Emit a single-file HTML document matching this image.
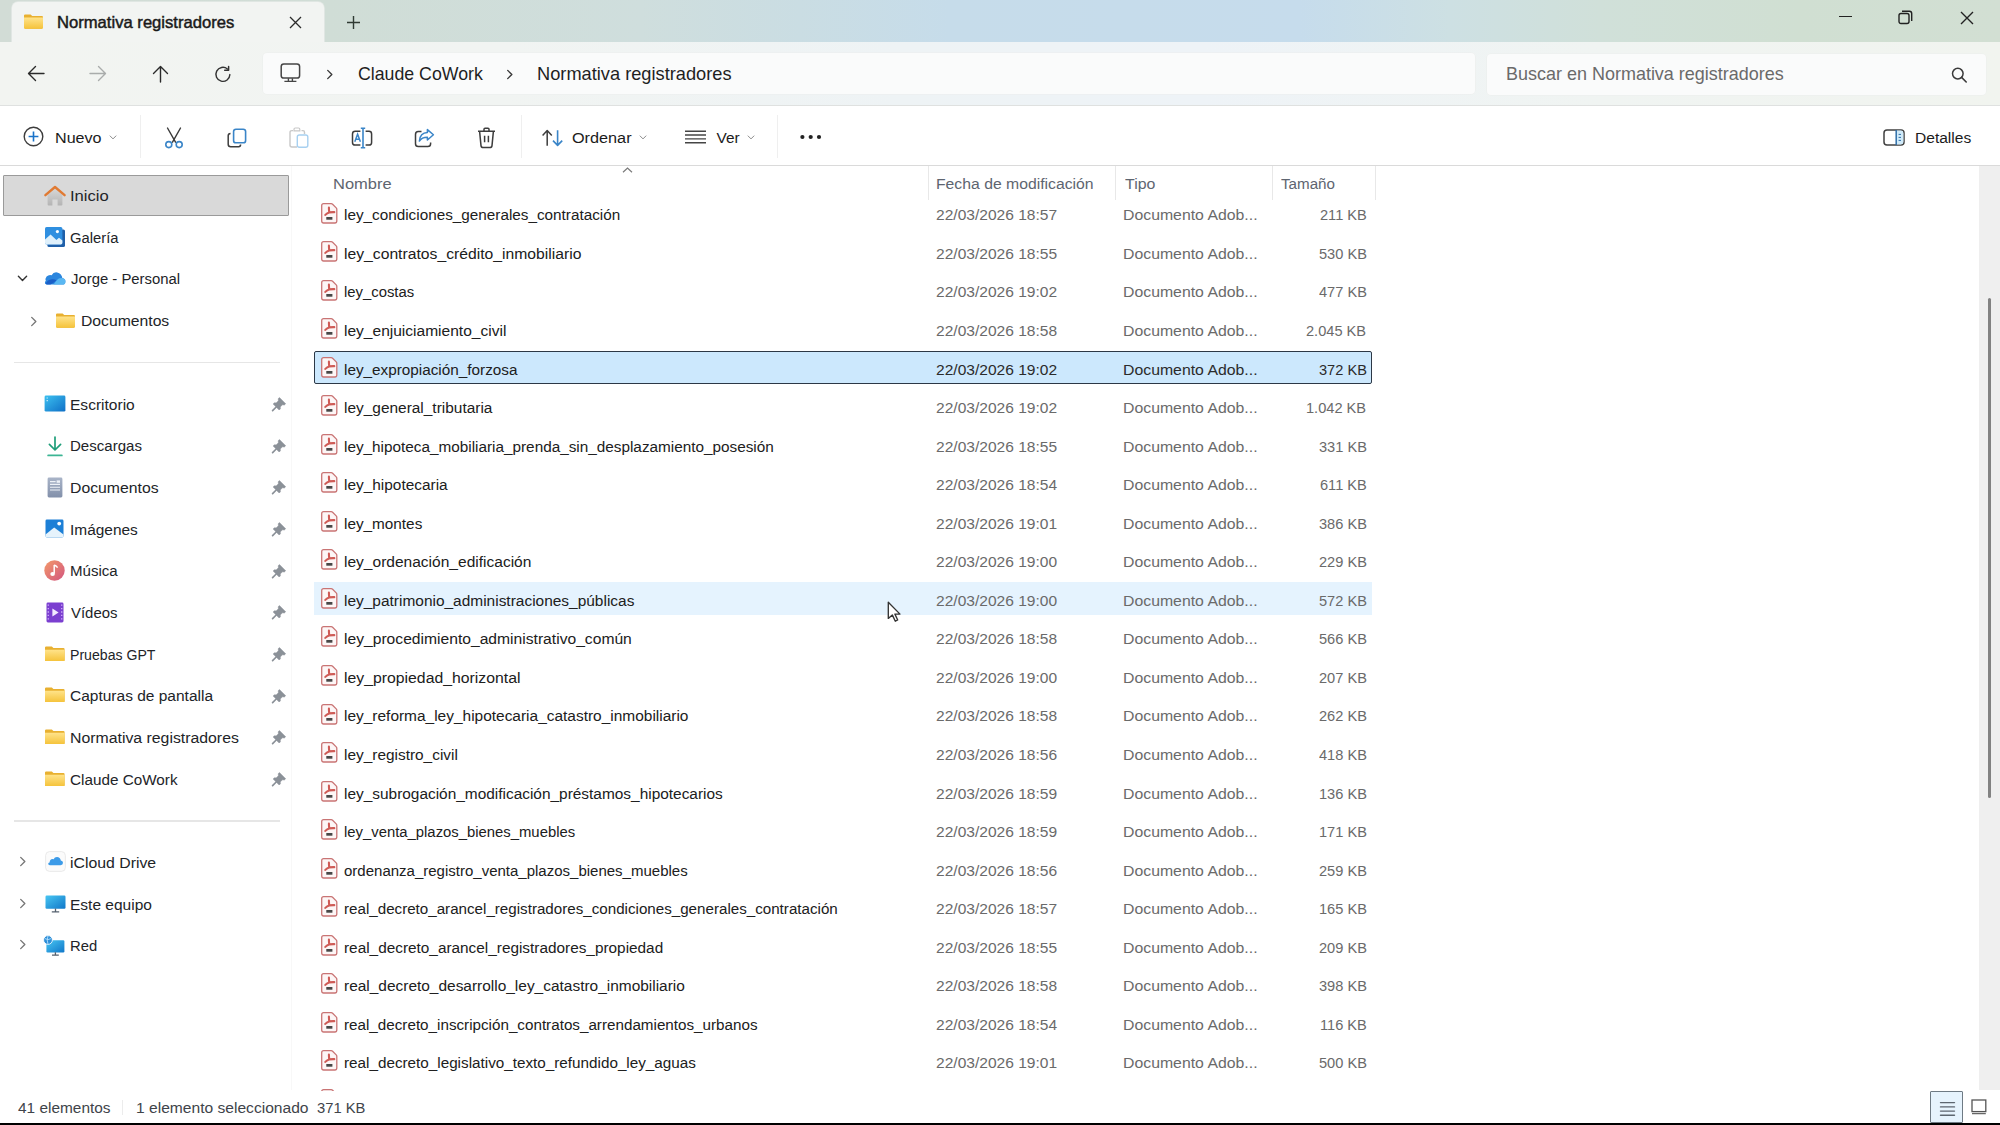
<!DOCTYPE html>
<html><head><meta charset="utf-8"><title>Normativa registradores</title>
<style>
html,body{margin:0;padding:0;}
body{width:2000px;height:1125px;overflow:hidden;position:relative;background:#fff;font-family:"Liberation Sans", sans-serif;}
.r{position:absolute;}
.t{position:absolute;white-space:nowrap;line-height:1;}
svg.r{overflow:visible;}
</style></head><body>
<div class="r" style="left:0.00px;top:0.00px;width:2000.00px;height:42.00px;background:linear-gradient(90deg,#d2dcd6 0%,#d0ddd6 16.5%,#cfdedd 32%,#cadde3 40%,#c6dcea 47.5%,#c6dcec 65%,#cde0e3 72.5%,#d0e0d9 80%,#d0dfd2 90%,#d2dfd3 100%)"></div>
<div class="r" style="left:11.50px;top:1.80px;width:312.50px;height:42.00px;background:#f2f4f2;border-radius:6px 6px 0 0;box-shadow:0 0 0 0.8px #e4e9e6"></div>
<svg class="r" style="left:23.80px;top:13.80px" width="19" height="15" viewBox="0 0 20 15"><defs><linearGradient id="fg" x1="0" y1="0" x2="0" y2="1"><stop offset="0" stop-color="#ffe38a"/><stop offset="1" stop-color="#f5c33b"/></linearGradient></defs><path d="M0 1.2Q0 0 1.2 0H7L8.6 1.6H18.8Q20 1.6 20 2.8V13.8Q20 15 18.8 15H1.2Q0 15 0 13.8Z" fill="#e8b030"/><path d="M0 3.4H20V13.8Q20 15 18.8 15H1.2Q0 15 0 13.8Z" fill="url(#fg)"/></svg>
<div class="t" style="left:56.55px;top:15.00px;font-size:15.9px;color:#1a1a1a;font-weight:400;transform:scaleX(1.0458);transform-origin:0 0;-webkit-text-stroke:0.45px #1a1a1a;">Normativa registradores</div>
<svg class="r" style="left:289.00px;top:16.00px;" width="13" height="13" viewBox="0 0 13 13" fill="none"><path d="M1 1L12 12M12 1L1 12" stroke="#2b2b2b" stroke-width="1.3"/></svg>
<svg class="r" style="left:346.00px;top:15.00px;" width="15" height="15" viewBox="0 0 15 15" fill="none"><path d="M7.5 1V14M1 7.5H14" stroke="#2f3a33" stroke-width="1.4"/></svg>
<div class="r" style="left:1838.50px;top:16.00px;width:13.00px;height:1.40px;background:#222"></div>
<svg class="r" style="left:1898.00px;top:10.00px;" width="15" height="15" viewBox="0 0 15 15" fill="none"><rect x="1" y="3.5" width="10" height="10" rx="2" stroke="#222" stroke-width="1.4"/><path d="M4 1.3H11.5Q13.7 1.3 13.7 3.5V11" stroke="#222" stroke-width="1.4"/></svg>
<svg class="r" style="left:1959.50px;top:10.50px;" width="14" height="14" viewBox="0 0 14 14" fill="none"><path d="M1 1L13 13M13 1L1 13" stroke="#222" stroke-width="1.4"/></svg>
<div class="r" style="left:0.00px;top:42.00px;width:2000.00px;height:63.00px;background:linear-gradient(90deg,#f2f4f1 0%,#f1f4f2 25%,#eef3f5 45%,#eef3f7 60%,#f0f4f2 80%,#f1f4ef 100%)"></div>
<div class="r" style="left:0.00px;top:104.60px;width:2000.00px;height:1.20px;background:#dfe1e0"></div>
<svg class="r" style="left:27.00px;top:65.00px;" width="18" height="17" viewBox="0 0 18 17" fill="none"><path d="M17 8.5H2M8.5 1.5L1.5 8.5 8.5 15.5" stroke="#2a2a2a" stroke-width="1.4" stroke-linecap="round" stroke-linejoin="round"/></svg>
<svg class="r" style="left:89.00px;top:65.00px;" width="18" height="17" viewBox="0 0 18 17" fill="none"><path d="M1 8.5H16M9.5 1.5L16.5 8.5 9.5 15.5" stroke="#a9acab" stroke-width="1.4" stroke-linecap="round" stroke-linejoin="round"/></svg>
<svg class="r" style="left:152.00px;top:65.00px;" width="17" height="18" viewBox="0 0 17 18" fill="none"><path d="M8.5 17V2M1.5 8.5L8.5 1.5 15.5 8.5" stroke="#2a2a2a" stroke-width="1.4" stroke-linecap="round" stroke-linejoin="round"/></svg>
<svg class="r" style="left:214.00px;top:64.60px;" width="18" height="18" viewBox="0 0 18 18" fill="none"><path d="M15.9 9.6A7 7 0 1 1 13.4 4" stroke="#333" stroke-width="1.45" stroke-linecap="round"/><path d="M14.6 1.4V5.3H10.7" stroke="#333" stroke-width="1.5" stroke-linecap="round" stroke-linejoin="round"/></svg>
<div class="r" style="left:262.60px;top:52.80px;width:1212.40px;height:41.50px;background:#fafbfb;border-radius:4px;box-shadow:0 0 0 0.6px #eceeed"></div>
<svg class="r" style="left:280.00px;top:63.00px;" width="21" height="20" viewBox="0 0 21 20" fill="none"><rect x="1.2" y="1" width="18.4" height="14" rx="2.6" stroke="#454545" stroke-width="1.5"/><path d="M4.4 18.4H16.4M8.4 15.2V18.2M12.4 15.2V18.2" stroke="#454545" stroke-width="1.4"/></svg>
<svg class="r" style="left:326.00px;top:68.50px" width="8" height="11" viewBox="0 0 8 12"><path d="M1.5 1.5L6 6 1.5 10.5" stroke="#3a3a3a" stroke-width="1.5" fill="none" stroke-linecap="round" stroke-linejoin="round"/></svg>
<div class="t" style="left:357.84px;top:65.00px;font-size:18.5px;color:#1f1f1f;font-weight:400;transform:scaleX(0.9581);transform-origin:0 0;">Claude CoWork</div>
<svg class="r" style="left:505.50px;top:68.50px" width="8" height="11" viewBox="0 0 8 12"><path d="M1.5 1.5L6 6 1.5 10.5" stroke="#3a3a3a" stroke-width="1.5" fill="none" stroke-linecap="round" stroke-linejoin="round"/></svg>
<div class="t" style="left:536.61px;top:65.00px;font-size:18.5px;color:#1f1f1f;font-weight:400;transform:scaleX(0.9857);transform-origin:0 0;">Normativa registradores</div>
<div class="r" style="left:1487.00px;top:54.00px;width:498.60px;height:40.80px;background:#fafbfb;border-radius:4px;box-shadow:0 0 0 0.6px #eceeed"></div>
<div class="t" style="left:1506.03px;top:65.00px;font-size:18.5px;color:#6a6a6a;font-weight:400;transform:scaleX(0.9718);transform-origin:0 0;">Buscar en Normativa registradores</div>
<svg class="r" style="left:1951.00px;top:66.50px;" width="17" height="16" viewBox="0 0 17 16" fill="none"><circle cx="6.8" cy="6.6" r="5.3" stroke="#3a3a3a" stroke-width="1.5"/><path d="M10.6 10.4L15.2 15" stroke="#3a3a3a" stroke-width="1.6" stroke-linecap="round"/></svg>
<div class="r" style="left:0.00px;top:105.80px;width:2000.00px;height:59.70px;background:#ffffff"></div>
<div class="r" style="left:0.00px;top:165.00px;width:2000.00px;height:1.20px;background:#dadada"></div>
<svg class="r" style="left:23.00px;top:126.00px;" width="21" height="21" viewBox="0 0 21 21" fill="none"><circle cx="10.5" cy="10.5" r="9.3" stroke="#3d3d3d" stroke-width="1.4"/><path d="M10.5 5.6V15.4M5.6 10.5H15.4" stroke="#1a73c9" stroke-width="1.6"/></svg>
<div class="t" style="left:54.95px;top:130.00px;font-size:15.4px;color:#1b1b1b;font-weight:400;transform:scaleX(1.0465);transform-origin:0 0;">Nuevo</div>
<svg class="r" style="left:109.40px;top:134.60px" width="8" height="5" viewBox="0 0 12 8"><path d="M1.3 1.5L6 6.2 10.7 1.5" stroke="#666" stroke-width="1.2" fill="none" stroke-linecap="round" stroke-linejoin="round"/></svg>
<div class="r" style="left:140.00px;top:115.00px;width:1.00px;height:43.00px;background:#efefef"></div>
<svg class="r" style="left:164.00px;top:126.50px;" width="20" height="22" viewBox="0 0 20 22" fill="none"><path d="M3.5 1L11.5 15.2M16.5 1L8.5 15.2" stroke="#3a3a3a" stroke-width="1.4" stroke-linecap="round"/><circle cx="4.8" cy="17.6" r="3" stroke="#3a85c8" stroke-width="1.6" fill="#fff"/><circle cx="15.2" cy="17.6" r="3" stroke="#3a85c8" stroke-width="1.6" fill="#fff"/></svg>
<svg class="r" style="left:227.00px;top:127.50px;" width="20" height="20" viewBox="0 0 20 20" fill="none"><path d="M3.5 5.5Q1.2 5.5 1.2 7.8V16.2Q1.2 18.7 3.7 18.7H11.6Q13.6 18.7 13.6 16.6" stroke="#3d3d3d" stroke-width="1.5" fill="none"/><rect x="6.6" y="1.2" width="12" height="13.6" rx="2.4" stroke="#3a85c8" stroke-width="1.6" fill="#fff"/></svg>
<svg class="r" style="left:289.00px;top:127.00px;" width="20" height="21" viewBox="0 0 20 21" fill="none"><path d="M4 3.6H3Q1 3.6 1 5.6V18Q1 20 3 20H8" stroke="#c8c8c8" stroke-width="1.4"/><path d="M5 2.2Q5 1 6.2 1H9.6Q10.8 1 10.8 2.2V3.8H5Z" stroke="#c8c8c8" stroke-width="1.2"/><path d="M12.5 3.6H14Q15.5 3.6 15.5 5.2V7" stroke="#c8c8c8" stroke-width="1.4"/><rect x="8.3" y="8" width="10.5" height="12.2" rx="2" stroke="#a7d0f0" stroke-width="1.4" fill="#fff"/></svg>
<svg class="r" style="left:350.50px;top:126.50px;" width="22" height="22" viewBox="0 0 22 22" fill="none"><path d="M9.4 4.2H4.2Q1.5 4.2 1.5 6.9V15.4Q1.5 18 4.2 18H9.4M14.6 4.2H18Q20.6 4.2 20.6 6.9V15.4Q20.6 18 18 18H14.6" stroke="#3d3d3d" stroke-width="1.5"/><path d="M12 1.2V20.8M9.8 1.2H14.2M9.8 20.8H14.2" stroke="#3a85c8" stroke-width="1.6"/><path d="M3.8 14.8L6.6 7.2 9.4 14.8M4.8 12.2H8.4" stroke="#3a85c8" stroke-width="1.5"/></svg>
<svg class="r" style="left:413.50px;top:127.50px;" width="21" height="20" viewBox="0 0 21 20" fill="none"><path d="M7.5 3.6H4.3Q1.5 3.6 1.5 6.4V15.8Q1.5 18.6 4.3 18.6H13.8Q16.6 18.6 16.6 15.8V14.5" stroke="#3d3d3d" stroke-width="1.5" fill="none"/><path d="M13.4 1.6L19.4 6.8 13.4 12V9.2C9.8 9.2 7.2 10.2 5.4 13 5.8 8.2 8.4 4.8 13.4 4.6Z" stroke="#3a85c8" stroke-width="1.5" stroke-linejoin="round" fill="none"/></svg>
<svg class="r" style="left:476.50px;top:126.50px;" width="19" height="22" viewBox="0 0 19 22" fill="none"><path d="M1 4.2H18M7 4V2.2Q7 1.2 8 1.2H11Q12 1.2 12 2.2V4" stroke="#3d3d3d" stroke-width="1.5"/><path d="M2.6 4.4L4 18.6Q4.2 20.6 6.2 20.6H12.8Q14.8 20.6 15 18.6L16.4 4.4" stroke="#3d3d3d" stroke-width="1.5" fill="none"/><path d="M7.6 8.8V15.2M11.4 8.8V15.2" stroke="#3d3d3d" stroke-width="1.5"/></svg>
<div class="r" style="left:521.00px;top:115.00px;width:1.00px;height:43.00px;background:#efefef"></div>
<svg class="r" style="left:541.00px;top:128.50px;" width="23" height="18" viewBox="0 0 23 18" fill="none"><path d="M6.2 16.8V2M1.6 6.4L6.2 1.6 10.8 6.4" stroke="#3d3d3d" stroke-width="1.5" stroke-linejoin="round"/><path d="M16.6 1.2V16M12 11.6L16.6 16.4 21.2 11.6" stroke="#3a85c8" stroke-width="1.6" stroke-linejoin="round"/></svg>
<div class="t" style="left:571.95px;top:130.00px;font-size:15.4px;color:#1b1b1b;font-weight:400;transform:scaleX(1.0545);transform-origin:0 0;">Ordenar</div>
<svg class="r" style="left:638.60px;top:134.60px" width="8" height="5" viewBox="0 0 12 8"><path d="M1.3 1.5L6 6.2 10.7 1.5" stroke="#666" stroke-width="1.2" fill="none" stroke-linecap="round" stroke-linejoin="round"/></svg>
<svg class="r" style="left:685.00px;top:129.50px;" width="22" height="15" viewBox="0 0 22 15" fill="none"><path d="M0 1.2H21M0 5H21M0 8.9H21M0 12.8H21" stroke="#454545" stroke-width="1.4"/></svg>
<div class="t" style="left:716.60px;top:130.00px;font-size:15.4px;color:#1b1b1b;font-weight:400;">Ver</div>
<svg class="r" style="left:746.60px;top:134.60px" width="8" height="5" viewBox="0 0 12 8"><path d="M1.3 1.5L6 6.2 10.7 1.5" stroke="#666" stroke-width="1.2" fill="none" stroke-linecap="round" stroke-linejoin="round"/></svg>
<div class="r" style="left:777.00px;top:115.00px;width:1.00px;height:43.00px;background:#efefef"></div>
<svg class="r" style="left:799.50px;top:134.00px;" width="22" height="6" viewBox="0 0 22 6" fill="none"><circle cx="2.4" cy="3" r="2.1" fill="#222"/><circle cx="10.7" cy="3" r="2.1" fill="#222"/><circle cx="19" cy="3" r="2.1" fill="#222"/></svg>
<svg class="r" style="left:1882.50px;top:128.50px;" width="22" height="17" viewBox="0 0 22 17" fill="none"><rect x="1" y="1" width="20" height="15" rx="3" stroke="#404040" stroke-width="1.5" fill="#fff"/><path d="M13.2 1.6H18Q20.4 1.6 20.4 4V13Q20.4 15.4 18 15.4H13.2Z" fill="#cfeaf9"/><path d="M13.2 1V16" stroke="#2f6ea8" stroke-width="1.5"/><path d="M15.6 5.4H18M15.6 8.4H18M15.6 11.4H18" stroke="#2f6ea8" stroke-width="1"/></svg>
<div class="t" style="left:1914.59px;top:130.00px;font-size:15.4px;color:#1b1b1b;font-weight:400;transform:scaleX(1.0111);transform-origin:0 0;">Detalles</div>
<div class="r" style="left:290.60px;top:166.20px;width:1.20px;height:924.00px;background:#f8f8f8"></div>
<div class="r" style="left:3.00px;top:174.60px;width:286.40px;height:41.00px;background:#d9d9d9;border:1.8px solid #9a9a9a;box-sizing:border-box;border-radius:1px"></div>
<svg class="r" style="left:44.20px;top:184.60px" width="22" height="21" viewBox="0 0 22 21"><defs><linearGradient id="hg" x1="0" y1="0" x2="0" y2="1"><stop offset="0" stop-color="#d8d8d8"/><stop offset="1" stop-color="#b4b4b4"/></linearGradient></defs><path d="M3.6 9.4L11 3.2 18.4 9.4V19.4Q18.4 20.4 17.4 20.4H13.6V14.6H8.4V20.4H4.6Q3.6 20.4 3.6 19.4Z" fill="url(#hg)"/><path d="M1.4 10.2L11 2 20.6 10.2" stroke="#e07a33" stroke-width="2.4" fill="none" stroke-linecap="round" stroke-linejoin="round"/></svg>
<div class="t" style="left:69.92px;top:188.00px;font-size:15.4px;color:#222428;font-weight:400;transform:scaleX(1.0794);transform-origin:0 0;">Inicio</div>
<svg class="r" style="left:44.20px;top:225.80px" width="22" height="22" viewBox="0 0 22 22"><rect x="3.4" y="3.4" width="17.6" height="17.6" rx="1.6" fill="#1f5fa8"/><rect x="1" y="1" width="17.4" height="17.4" rx="1.6" fill="#2f8fe0"/><path d="M1 13.6L6.6 8.6 12.4 14 15 11.8 18.4 14.6V16.8Q18.4 18.4 16.8 18.4H2.6Q1 18.4 1 16.8Z" fill="#dff0fb"/><circle cx="13.4" cy="5.6" r="1.6" fill="#fff"/></svg>
<div class="t" style="left:70.04px;top:230.00px;font-size:15.4px;color:#222428;font-weight:400;transform:scaleX(0.9600);transform-origin:0 0;">Galería</div>
<svg class="r" style="left:16.80px;top:275.20px" width="11" height="7" viewBox="0 0 12 8"><path d="M1.3 1.5L6 6.2 10.7 1.5" stroke="#333" stroke-width="1.6" fill="none" stroke-linecap="round" stroke-linejoin="round"/></svg>
<svg class="r" style="left:44.40px;top:271.40px" width="22" height="14" viewBox="0 0 22 14"><path d="M6.2 13.6H18.2Q21.4 13.6 21.4 10.4 21.4 7.4 18.4 7.2 17.8 2.4 13.2 1.4 9.4.8 7.6 4.2 4.6 3.4 2.6 5.6 1 7.6 1.8 9.8 .6 11.2 1 12.4 1.6 13.6 6.2 13.6Z" fill="#2b86de"/><path d="M9.6 13.6H18.2Q21.4 13.6 21.4 10.4 21.4 7.4 18.4 7.2 15.2 6.6 12.6 9.2Z" fill="#5ab8f2"/><path d="M1.6 12.8Q3.4 8.6 8 8.2 10.4 8 12.6 9.2 9.8 11.6 6.4 13.6H2.8Z" fill="#1a5fc8"/></svg>
<div class="t" style="left:71.00px;top:271.00px;font-size:15.4px;color:#222428;font-weight:400;transform:scaleX(0.9661);transform-origin:0 0;">Jorge - Personal</div>
<svg class="r" style="left:29.60px;top:315.80px" width="8" height="11" viewBox="0 0 8 12"><path d="M1.5 1.5L6 6 1.5 10.5" stroke="#777" stroke-width="1.5" fill="none" stroke-linecap="round" stroke-linejoin="round"/></svg>
<svg class="r" style="left:55.80px;top:313.00px" width="19" height="15" viewBox="0 0 20 15"><defs><linearGradient id="fg" x1="0" y1="0" x2="0" y2="1"><stop offset="0" stop-color="#ffe38a"/><stop offset="1" stop-color="#f5c33b"/></linearGradient></defs><path d="M0 1.2Q0 0 1.2 0H7L8.6 1.6H18.8Q20 1.6 20 2.8V13.8Q20 15 18.8 15H1.2Q0 15 0 13.8Z" fill="#e8b030"/><path d="M0 3.4H20V13.8Q20 15 18.8 15H1.2Q0 15 0 13.8Z" fill="url(#fg)"/></svg>
<div class="t" style="left:80.58px;top:313.00px;font-size:15.4px;color:#222428;font-weight:400;transform:scaleX(1.0212);transform-origin:0 0;">Documentos</div>
<div class="r" style="left:13.80px;top:361.60px;width:266.00px;height:1.20px;background:#e6e6e6"></div>
<svg class="r" style="left:44.20px;top:395.20px" width="22" height="17" viewBox="0 0 22 17"><defs><linearGradient id="dg" x1="0" y1="0" x2="1" y2="1"><stop offset="0" stop-color="#3cc0f0"/><stop offset="1" stop-color="#0f6fc6"/></linearGradient></defs><rect x=".6" y=".6" width="20.8" height="16" rx="1.4" fill="url(#dg)"/><path d="M2.6 3H3.8M2.6 5.6H3.8" stroke="#d8f2ff" stroke-width="1.2"/></svg>
<div class="t" style="left:69.99px;top:397.00px;font-size:15.4px;color:#222428;font-weight:400;transform:scaleX(1.0095);transform-origin:0 0;">Escritorio</div>
<svg class="r" style="left:271.00px;top:396.00px" width="16" height="16" viewBox="0 0 16 16"><path d="M8.4 1.6L14.6 7.8 13.4 8.9 11.4 8.8 9.2 11 9.4 12.8 8.2 14 2.2 8 3.4 6.8 5.2 7 7.4 4.8 7.3 2.8Z" fill="#8b9198" stroke="#8b9198" stroke-width=".6" stroke-linejoin="round"/><path d="M5.2 11L1.6 14.6" stroke="#8b9198" stroke-width="1.7" stroke-linecap="round"/></svg>
<svg class="r" style="left:47.00px;top:435.60px" width="16" height="21" viewBox="0 0 16 21"><path d="M8 1V13.8M2.4 8.4L8 14 13.6 8.4" stroke="#1f9e7a" stroke-width="1.7" fill="none" stroke-linecap="round" stroke-linejoin="round"/><path d="M1.2 19.4H14.8" stroke="#3cb594" stroke-width="1.9" stroke-linecap="round"/></svg>
<div class="t" style="left:70.02px;top:438.00px;font-size:15.4px;color:#222428;font-weight:400;transform:scaleX(0.9778);transform-origin:0 0;">Descargas</div>
<svg class="r" style="left:271.00px;top:437.70px" width="16" height="16" viewBox="0 0 16 16"><path d="M8.4 1.6L14.6 7.8 13.4 8.9 11.4 8.8 9.2 11 9.4 12.8 8.2 14 2.2 8 3.4 6.8 5.2 7 7.4 4.8 7.3 2.8Z" fill="#8b9198" stroke="#8b9198" stroke-width=".6" stroke-linejoin="round"/><path d="M5.2 11L1.6 14.6" stroke="#8b9198" stroke-width="1.7" stroke-linecap="round"/></svg>
<svg class="r" style="left:47.00px;top:476.80px" width="16" height="21" viewBox="0 0 16 21"><defs><linearGradient id="docg" x1="0" y1="0" x2="0" y2="1"><stop offset="0" stop-color="#a9b4c8"/><stop offset="1" stop-color="#8290aa"/></linearGradient></defs><rect x=".6" y=".6" width="14.8" height="19.8" rx="1.4" fill="url(#docg)"/><path d="M3 4.6H8.6M3 7.4H13M3 10.2H13M3 13H13" stroke="#eef2f8" stroke-width="1.1"/><rect x="9.6" y="3.4" width="3.4" height="2.4" fill="#eef2f8"/></svg>
<div class="t" style="left:69.98px;top:480.00px;font-size:15.4px;color:#222428;font-weight:400;transform:scaleX(1.0247);transform-origin:0 0;">Documentos</div>
<svg class="r" style="left:271.00px;top:479.40px" width="16" height="16" viewBox="0 0 16 16"><path d="M8.4 1.6L14.6 7.8 13.4 8.9 11.4 8.8 9.2 11 9.4 12.8 8.2 14 2.2 8 3.4 6.8 5.2 7 7.4 4.8 7.3 2.8Z" fill="#8b9198" stroke="#8b9198" stroke-width=".6" stroke-linejoin="round"/><path d="M5.2 11L1.6 14.6" stroke="#8b9198" stroke-width="1.7" stroke-linecap="round"/></svg>
<svg class="r" style="left:45.20px;top:519.20px" width="19" height="19" viewBox="0 0 19 19"><rect x=".5" y=".5" width="18" height="18" rx="1.4" fill="#1c7fd6"/><path d="M.5 15.6L9.2 8.6 18.5 15.6V17.2Q18.5 18.5 17.2 18.5H1.8Q.5 18.5 .5 17.2Z" fill="#e6f3fc"/><circle cx="14.2" cy="4.6" r="1.9" fill="#fff"/></svg>
<div class="t" style="left:70.00px;top:522.00px;font-size:15.4px;color:#222428;font-weight:400;transform:scaleX(1.0030);transform-origin:0 0;">Imágenes</div>
<svg class="r" style="left:271.00px;top:521.00px" width="16" height="16" viewBox="0 0 16 16"><path d="M8.4 1.6L14.6 7.8 13.4 8.9 11.4 8.8 9.2 11 9.4 12.8 8.2 14 2.2 8 3.4 6.8 5.2 7 7.4 4.8 7.3 2.8Z" fill="#8b9198" stroke="#8b9198" stroke-width=".6" stroke-linejoin="round"/><path d="M5.2 11L1.6 14.6" stroke="#8b9198" stroke-width="1.7" stroke-linecap="round"/></svg>
<svg class="r" style="left:44.40px;top:559.80px" width="21" height="21" viewBox="0 0 21 21"><defs><linearGradient id="mg" x1="0" y1="0" x2="1" y2="1"><stop offset="0" stop-color="#f39a6a"/><stop offset="1" stop-color="#d2557f"/></linearGradient></defs><circle cx="10.5" cy="10.5" r="10.2" fill="url(#mg)"/><path d="M10.2 5V13.6" stroke="#fff" stroke-width="1.5"/><path d="M10.2 5Q12.6 5.8 13.6 7.6" stroke="#fff" stroke-width="1.4" fill="none"/><ellipse cx="8.6" cy="14" rx="2.3" ry="1.9" fill="#fff"/></svg>
<div class="t" style="left:70.02px;top:563.00px;font-size:15.4px;color:#222428;font-weight:400;transform:scaleX(0.9792);transform-origin:0 0;">Música</div>
<svg class="r" style="left:271.00px;top:562.70px" width="16" height="16" viewBox="0 0 16 16"><path d="M8.4 1.6L14.6 7.8 13.4 8.9 11.4 8.8 9.2 11 9.4 12.8 8.2 14 2.2 8 3.4 6.8 5.2 7 7.4 4.8 7.3 2.8Z" fill="#8b9198" stroke="#8b9198" stroke-width=".6" stroke-linejoin="round"/><path d="M5.2 11L1.6 14.6" stroke="#8b9198" stroke-width="1.7" stroke-linecap="round"/></svg>
<svg class="r" style="left:46.20px;top:601.60px" width="18" height="21" viewBox="0 0 18 21"><rect x=".5" y=".5" width="17" height="20" rx="1.4" fill="#7b3fd0"/><path d="M1.6 3.2H3M1.6 6.6H3M1.6 10H3M1.6 13.4H3M1.6 16.8H3M15 3.2H16.4M15 6.6H16.4M15 10H16.4M15 13.4H16.4M15 16.8H16.4" stroke="#c9a8f5" stroke-width="1.3"/><path d="M6.4 6.4V14.4L12.6 10.4Z" fill="#f2eaff"/></svg>
<div class="t" style="left:71.00px;top:605.00px;font-size:15.4px;color:#222428;font-weight:400;transform:scaleX(0.9708);transform-origin:0 0;">Vídeos</div>
<svg class="r" style="left:271.00px;top:604.40px" width="16" height="16" viewBox="0 0 16 16"><path d="M8.4 1.6L14.6 7.8 13.4 8.9 11.4 8.8 9.2 11 9.4 12.8 8.2 14 2.2 8 3.4 6.8 5.2 7 7.4 4.8 7.3 2.8Z" fill="#8b9198" stroke="#8b9198" stroke-width=".6" stroke-linejoin="round"/><path d="M5.2 11L1.6 14.6" stroke="#8b9198" stroke-width="1.7" stroke-linecap="round"/></svg>
<svg class="r" style="left:44.80px;top:645.80px" width="19.6" height="15.5" viewBox="0 0 20 15"><defs><linearGradient id="fg" x1="0" y1="0" x2="0" y2="1"><stop offset="0" stop-color="#ffe38a"/><stop offset="1" stop-color="#f5c33b"/></linearGradient></defs><path d="M0 1.2Q0 0 1.2 0H7L8.6 1.6H18.8Q20 1.6 20 2.8V13.8Q20 15 18.8 15H1.2Q0 15 0 13.8Z" fill="#e8b030"/><path d="M0 3.4H20V13.8Q20 15 18.8 15H1.2Q0 15 0 13.8Z" fill="url(#fg)"/></svg>
<div class="t" style="left:70.08px;top:647.00px;font-size:15.4px;color:#222428;font-weight:400;transform:scaleX(0.9163);transform-origin:0 0;">Pruebas GPT</div>
<svg class="r" style="left:271.00px;top:646.00px" width="16" height="16" viewBox="0 0 16 16"><path d="M8.4 1.6L14.6 7.8 13.4 8.9 11.4 8.8 9.2 11 9.4 12.8 8.2 14 2.2 8 3.4 6.8 5.2 7 7.4 4.8 7.3 2.8Z" fill="#8b9198" stroke="#8b9198" stroke-width=".6" stroke-linejoin="round"/><path d="M5.2 11L1.6 14.6" stroke="#8b9198" stroke-width="1.7" stroke-linecap="round"/></svg>
<svg class="r" style="left:44.80px;top:687.47px" width="19.6" height="15.5" viewBox="0 0 20 15"><defs><linearGradient id="fg" x1="0" y1="0" x2="0" y2="1"><stop offset="0" stop-color="#ffe38a"/><stop offset="1" stop-color="#f5c33b"/></linearGradient></defs><path d="M0 1.2Q0 0 1.2 0H7L8.6 1.6H18.8Q20 1.6 20 2.8V13.8Q20 15 18.8 15H1.2Q0 15 0 13.8Z" fill="#e8b030"/><path d="M0 3.4H20V13.8Q20 15 18.8 15H1.2Q0 15 0 13.8Z" fill="url(#fg)"/></svg>
<div class="t" style="left:69.99px;top:688.00px;font-size:15.4px;color:#222428;font-weight:400;transform:scaleX(1.0071);transform-origin:0 0;">Capturas de pantalla</div>
<svg class="r" style="left:271.00px;top:687.67px" width="16" height="16" viewBox="0 0 16 16"><path d="M8.4 1.6L14.6 7.8 13.4 8.9 11.4 8.8 9.2 11 9.4 12.8 8.2 14 2.2 8 3.4 6.8 5.2 7 7.4 4.8 7.3 2.8Z" fill="#8b9198" stroke="#8b9198" stroke-width=".6" stroke-linejoin="round"/><path d="M5.2 11L1.6 14.6" stroke="#8b9198" stroke-width="1.7" stroke-linecap="round"/></svg>
<svg class="r" style="left:44.80px;top:729.14px" width="19.6" height="15.5" viewBox="0 0 20 15"><defs><linearGradient id="fg" x1="0" y1="0" x2="0" y2="1"><stop offset="0" stop-color="#ffe38a"/><stop offset="1" stop-color="#f5c33b"/></linearGradient></defs><path d="M0 1.2Q0 0 1.2 0H7L8.6 1.6H18.8Q20 1.6 20 2.8V13.8Q20 15 18.8 15H1.2Q0 15 0 13.8Z" fill="#e8b030"/><path d="M0 3.4H20V13.8Q20 15 18.8 15H1.2Q0 15 0 13.8Z" fill="url(#fg)"/></svg>
<div class="t" style="left:69.97px;top:730.00px;font-size:15.4px;color:#222428;font-weight:400;transform:scaleX(1.0282);transform-origin:0 0;">Normativa registradores</div>
<svg class="r" style="left:271.00px;top:729.34px" width="16" height="16" viewBox="0 0 16 16"><path d="M8.4 1.6L14.6 7.8 13.4 8.9 11.4 8.8 9.2 11 9.4 12.8 8.2 14 2.2 8 3.4 6.8 5.2 7 7.4 4.8 7.3 2.8Z" fill="#8b9198" stroke="#8b9198" stroke-width=".6" stroke-linejoin="round"/><path d="M5.2 11L1.6 14.6" stroke="#8b9198" stroke-width="1.7" stroke-linecap="round"/></svg>
<svg class="r" style="left:44.80px;top:770.81px" width="19.6" height="15.5" viewBox="0 0 20 15"><defs><linearGradient id="fg" x1="0" y1="0" x2="0" y2="1"><stop offset="0" stop-color="#ffe38a"/><stop offset="1" stop-color="#f5c33b"/></linearGradient></defs><path d="M0 1.2Q0 0 1.2 0H7L8.6 1.6H18.8Q20 1.6 20 2.8V13.8Q20 15 18.8 15H1.2Q0 15 0 13.8Z" fill="#e8b030"/><path d="M0 3.4H20V13.8Q20 15 18.8 15H1.2Q0 15 0 13.8Z" fill="url(#fg)"/></svg>
<div class="t" style="left:70.01px;top:772.00px;font-size:15.4px;color:#222428;font-weight:400;transform:scaleX(0.9925);transform-origin:0 0;">Claude CoWork</div>
<svg class="r" style="left:271.00px;top:771.01px" width="16" height="16" viewBox="0 0 16 16"><path d="M8.4 1.6L14.6 7.8 13.4 8.9 11.4 8.8 9.2 11 9.4 12.8 8.2 14 2.2 8 3.4 6.8 5.2 7 7.4 4.8 7.3 2.8Z" fill="#8b9198" stroke="#8b9198" stroke-width=".6" stroke-linejoin="round"/><path d="M5.2 11L1.6 14.6" stroke="#8b9198" stroke-width="1.7" stroke-linecap="round"/></svg>
<div class="r" style="left:13.80px;top:820.40px;width:266.00px;height:1.20px;background:#e6e6e6"></div>
<svg class="r" style="left:19.20px;top:856.00px" width="8" height="11" viewBox="0 0 8 12"><path d="M1.5 1.5L6 6 1.5 10.5" stroke="#777" stroke-width="1.5" fill="none" stroke-linecap="round" stroke-linejoin="round"/></svg>
<svg class="r" style="left:44.60px;top:851.40px" width="21" height="21" viewBox="0 0 21 21"><rect x=".6" y=".6" width="19.8" height="19.8" rx="4" fill="#fbfbfb" stroke="#e4e4e4" stroke-width=".8"/><path d="M5.2 14.2H15.6Q18 14.2 18 11.8 18 9.6 15.8 9.4 15.2 6.2 12 6 9.6 6 8.6 8.2 6.6 7.6 5.4 9 4.4 10.2 4.8 11.2 3 11.6 3.2 13 3.6 14.2 5.2 14.2Z" fill="#3c9be8"/></svg>
<div class="t" style="left:69.97px;top:855.00px;font-size:15.4px;color:#222428;font-weight:400;transform:scaleX(1.0280);transform-origin:0 0;">iCloud Drive</div>
<svg class="r" style="left:19.20px;top:897.60px" width="8" height="11" viewBox="0 0 8 12"><path d="M1.5 1.5L6 6 1.5 10.5" stroke="#777" stroke-width="1.5" fill="none" stroke-linecap="round" stroke-linejoin="round"/></svg>
<svg class="r" style="left:44.60px;top:895.00px" width="21" height="18" viewBox="0 0 21 18"><defs><linearGradient id="pg" x1="0" y1="0" x2="1" y2="1"><stop offset="0" stop-color="#48c6f2"/><stop offset="1" stop-color="#1077c9"/></linearGradient></defs><rect x=".5" y=".5" width="20" height="13.2" rx="1.2" fill="url(#pg)"/><path d="M10.5 13.6V16.4M6.8 16.8H14.2" stroke="#54606e" stroke-width="1.3"/></svg>
<div class="t" style="left:69.99px;top:897.00px;font-size:15.4px;color:#222428;font-weight:400;transform:scaleX(1.0075);transform-origin:0 0;">Este equipo</div>
<svg class="r" style="left:19.20px;top:939.40px" width="8" height="11" viewBox="0 0 8 12"><path d="M1.5 1.5L6 6 1.5 10.5" stroke="#777" stroke-width="1.5" fill="none" stroke-linecap="round" stroke-linejoin="round"/></svg>
<svg class="r" style="left:43.20px;top:935.00px" width="22" height="21" viewBox="0 0 22 21"><defs><linearGradient id="ng" x1="0" y1="0" x2="1" y2="1"><stop offset="0" stop-color="#48c6f2"/><stop offset="1" stop-color="#1077c9"/></linearGradient></defs><rect x="3.4" y="5.2" width="18" height="12.2" rx="1.2" fill="url(#ng)"/><path d="M12.4 17.2V19.6M9 20.2H15.8" stroke="#54606e" stroke-width="1.3"/><circle cx="5" cy="5" r="4.4" fill="#2e8fd8" stroke="#fff" stroke-width=".8"/><path d="M2 3.6Q5 5.6 8 3.6M5 .8Q3.4 5 5 9.2" stroke="#bfe6ff" stroke-width=".8" fill="none"/></svg>
<div class="t" style="left:70.04px;top:938.00px;font-size:15.4px;color:#222428;font-weight:400;transform:scaleX(0.9630);transform-origin:0 0;">Red</div>
<div class="t" style="left:332.53px;top:176.00px;font-size:15.4px;color:#5e6570;font-weight:400;transform:scaleX(1.0717);transform-origin:0 0;">Nombre</div>
<svg class="r" style="left:621.50px;top:166.60px;" width="11" height="6" viewBox="0 0 11 6" fill="none"><path d="M1 5.2L5.5 1 10 5.2" stroke="#7a7a7a" stroke-width="1.2" fill="none"/></svg>
<div class="r" style="left:928.10px;top:166.00px;width:1.10px;height:34.00px;background:#e8e8e8"></div>
<div class="r" style="left:1115.40px;top:166.00px;width:1.10px;height:34.00px;background:#e8e8e8"></div>
<div class="r" style="left:1271.90px;top:166.00px;width:1.10px;height:34.00px;background:#e8e8e8"></div>
<div class="r" style="left:1375.40px;top:166.00px;width:1.10px;height:34.00px;background:#e8e8e8"></div>
<div class="t" style="left:935.98px;top:176.00px;font-size:15.4px;color:#5e6570;font-weight:400;transform:scaleX(1.0230);transform-origin:0 0;">Fecha de modificación</div>
<div class="t" style="left:1125.00px;top:176.00px;font-size:15.4px;color:#5e6570;font-weight:400;transform:scaleX(1.0345);transform-origin:0 0;">Tipo</div>
<div class="t" style="left:1280.50px;top:176.00px;font-size:15.4px;color:#5e6570;font-weight:400;transform:scaleX(0.9861);transform-origin:0 0;">Tamaño</div>
<div class="r" style="left:0;top:201px;width:1979px;height:889.5px;overflow:hidden">
<div class="r" style="left:313.60px;top:381.30px;width:1058.40px;height:32.50px;background:#e5f3fe"></div>
<div class="r" style="left:313.60px;top:150.40px;width:1058.00px;height:32.20px;background:#cce8fd;border:1.6px solid #2c3846;box-sizing:border-box;border-radius:2px"></div>
<svg class="r" style="left:320.95px;top:1.50px" width="17" height="21" viewBox="0 0 17 21"><path d="M2.6 .7H10.2Q11 .7 11.6 1.3L15.2 4.9Q15.8 5.5 15.8 6.3V18.1Q15.8 20 13.9 20H2.6Q.7 20 .7 18.1V2.6Q.7 .7 2.6 .7Z" fill="#fdf6f6" stroke="#c97474" stroke-width="1.3"/><path d="M7.9 4.6Q8 7.4 8.2 9.4M4.3 11.9Q6.2 9.9 8.2 9.4M13.3 9.1Q10.6 9 8.2 9.4" stroke="#cf5b56" stroke-width="2.1" stroke-linecap="round" fill="none"/><rect x="5.3" y="14" width="6.1" height="2.7" fill="#474747"/></svg>
<div class="t" style="left:343.81px;top:6.00px;font-size:15.4px;color:#202020;font-weight:400;transform:scaleX(0.9935);transform-origin:0 0;">ley_condiciones_generales_contratación</div>
<div class="t" style="left:935.69px;top:6.00px;font-size:15.4px;color:#6a6a6a;font-weight:400;transform:scaleX(1.0110);transform-origin:0 0;">22/03/2026 18:57</div>
<div class="t" style="left:1123.37px;top:6.00px;font-size:15.4px;color:#6a6a6a;font-weight:400;transform:scaleX(1.0279);transform-origin:0 0;">Documento Adob...</div>
<div class="t" style="left:1319.50px;top:6.00px;font-size:15.4px;color:#6a6a6a;font-weight:400;transform:scaleX(0.9490);transform-origin:0 0;">211 KB</div>
<svg class="r" style="left:320.95px;top:40.04px" width="17" height="21" viewBox="0 0 17 21"><path d="M2.6 .7H10.2Q11 .7 11.6 1.3L15.2 4.9Q15.8 5.5 15.8 6.3V18.1Q15.8 20 13.9 20H2.6Q.7 20 .7 18.1V2.6Q.7 .7 2.6 .7Z" fill="#fdf6f6" stroke="#c97474" stroke-width="1.3"/><path d="M7.9 4.6Q8 7.4 8.2 9.4M4.3 11.9Q6.2 9.9 8.2 9.4M13.3 9.1Q10.6 9 8.2 9.4" stroke="#cf5b56" stroke-width="2.1" stroke-linecap="round" fill="none"/><rect x="5.3" y="14" width="6.1" height="2.7" fill="#474747"/></svg>
<div class="t" style="left:343.78px;top:45.00px;font-size:15.4px;color:#202020;font-weight:400;transform:scaleX(1.0203);transform-origin:0 0;">ley_contratos_crédito_inmobiliario</div>
<div class="t" style="left:935.69px;top:45.00px;font-size:15.4px;color:#6a6a6a;font-weight:400;transform:scaleX(1.0110);transform-origin:0 0;">22/03/2026 18:55</div>
<div class="t" style="left:1123.37px;top:45.00px;font-size:15.4px;color:#6a6a6a;font-weight:400;transform:scaleX(1.0279);transform-origin:0 0;">Documento Adob...</div>
<div class="t" style="left:1318.55px;top:45.00px;font-size:15.4px;color:#6a6a6a;font-weight:400;transform:scaleX(0.9490);transform-origin:0 0;">530 KB</div>
<svg class="r" style="left:320.95px;top:78.58px" width="17" height="21" viewBox="0 0 17 21"><path d="M2.6 .7H10.2Q11 .7 11.6 1.3L15.2 4.9Q15.8 5.5 15.8 6.3V18.1Q15.8 20 13.9 20H2.6Q.7 20 .7 18.1V2.6Q.7 .7 2.6 .7Z" fill="#fdf6f6" stroke="#c97474" stroke-width="1.3"/><path d="M7.9 4.6Q8 7.4 8.2 9.4M4.3 11.9Q6.2 9.9 8.2 9.4M13.3 9.1Q10.6 9 8.2 9.4" stroke="#cf5b56" stroke-width="2.1" stroke-linecap="round" fill="none"/><rect x="5.3" y="14" width="6.1" height="2.7" fill="#474747"/></svg>
<div class="t" style="left:343.84px;top:83.00px;font-size:15.4px;color:#202020;font-weight:400;transform:scaleX(0.9648);transform-origin:0 0;">ley_costas</div>
<div class="t" style="left:935.69px;top:83.00px;font-size:15.4px;color:#6a6a6a;font-weight:400;transform:scaleX(1.0110);transform-origin:0 0;">22/03/2026 19:02</div>
<div class="t" style="left:1123.37px;top:83.00px;font-size:15.4px;color:#6a6a6a;font-weight:400;transform:scaleX(1.0279);transform-origin:0 0;">Documento Adob...</div>
<div class="t" style="left:1318.55px;top:83.00px;font-size:15.4px;color:#6a6a6a;font-weight:400;transform:scaleX(0.9490);transform-origin:0 0;">477 KB</div>
<svg class="r" style="left:320.95px;top:117.12px" width="17" height="21" viewBox="0 0 17 21"><path d="M2.6 .7H10.2Q11 .7 11.6 1.3L15.2 4.9Q15.8 5.5 15.8 6.3V18.1Q15.8 20 13.9 20H2.6Q.7 20 .7 18.1V2.6Q.7 .7 2.6 .7Z" fill="#fdf6f6" stroke="#c97474" stroke-width="1.3"/><path d="M7.9 4.6Q8 7.4 8.2 9.4M4.3 11.9Q6.2 9.9 8.2 9.4M13.3 9.1Q10.6 9 8.2 9.4" stroke="#cf5b56" stroke-width="2.1" stroke-linecap="round" fill="none"/><rect x="5.3" y="14" width="6.1" height="2.7" fill="#474747"/></svg>
<div class="t" style="left:343.79px;top:122.00px;font-size:15.4px;color:#202020;font-weight:400;transform:scaleX(1.0094);transform-origin:0 0;">ley_enjuiciamiento_civil</div>
<div class="t" style="left:935.69px;top:122.00px;font-size:15.4px;color:#6a6a6a;font-weight:400;transform:scaleX(1.0110);transform-origin:0 0;">22/03/2026 18:58</div>
<div class="t" style="left:1123.37px;top:122.00px;font-size:15.4px;color:#6a6a6a;font-weight:400;transform:scaleX(1.0279);transform-origin:0 0;">Documento Adob...</div>
<div class="t" style="left:1306.21px;top:122.00px;font-size:15.4px;color:#6a6a6a;font-weight:400;transform:scaleX(0.9490);transform-origin:0 0;">2.045 KB</div>
<svg class="r" style="left:320.95px;top:155.66px" width="17" height="21" viewBox="0 0 17 21"><path d="M2.6 .7H10.2Q11 .7 11.6 1.3L15.2 4.9Q15.8 5.5 15.8 6.3V18.1Q15.8 20 13.9 20H2.6Q.7 20 .7 18.1V2.6Q.7 .7 2.6 .7Z" fill="#fdf6f6" stroke="#c97474" stroke-width="1.3"/><path d="M7.9 4.6Q8 7.4 8.2 9.4M4.3 11.9Q6.2 9.9 8.2 9.4M13.3 9.1Q10.6 9 8.2 9.4" stroke="#cf5b56" stroke-width="2.1" stroke-linecap="round" fill="none"/><rect x="5.3" y="14" width="6.1" height="2.7" fill="#474747"/></svg>
<div class="t" style="left:343.81px;top:161.00px;font-size:15.4px;color:#202020;font-weight:400;transform:scaleX(0.9937);transform-origin:0 0;">ley_expropiación_forzosa</div>
<div class="t" style="left:935.69px;top:161.00px;font-size:15.4px;color:#2b2b2b;font-weight:400;transform:scaleX(1.0110);transform-origin:0 0;">22/03/2026 19:02</div>
<div class="t" style="left:1123.37px;top:161.00px;font-size:15.4px;color:#2b2b2b;font-weight:400;transform:scaleX(1.0279);transform-origin:0 0;">Documento Adob...</div>
<div class="t" style="left:1318.55px;top:161.00px;font-size:15.4px;color:#2b2b2b;font-weight:400;transform:scaleX(0.9490);transform-origin:0 0;">372 KB</div>
<svg class="r" style="left:320.95px;top:194.20px" width="17" height="21" viewBox="0 0 17 21"><path d="M2.6 .7H10.2Q11 .7 11.6 1.3L15.2 4.9Q15.8 5.5 15.8 6.3V18.1Q15.8 20 13.9 20H2.6Q.7 20 .7 18.1V2.6Q.7 .7 2.6 .7Z" fill="#fdf6f6" stroke="#c97474" stroke-width="1.3"/><path d="M7.9 4.6Q8 7.4 8.2 9.4M4.3 11.9Q6.2 9.9 8.2 9.4M13.3 9.1Q10.6 9 8.2 9.4" stroke="#cf5b56" stroke-width="2.1" stroke-linecap="round" fill="none"/><rect x="5.3" y="14" width="6.1" height="2.7" fill="#474747"/></svg>
<div class="t" style="left:343.80px;top:199.00px;font-size:15.4px;color:#202020;font-weight:400;transform:scaleX(1.0027);transform-origin:0 0;">ley_general_tributaria</div>
<div class="t" style="left:935.69px;top:199.00px;font-size:15.4px;color:#6a6a6a;font-weight:400;transform:scaleX(1.0110);transform-origin:0 0;">22/03/2026 19:02</div>
<div class="t" style="left:1123.37px;top:199.00px;font-size:15.4px;color:#6a6a6a;font-weight:400;transform:scaleX(1.0279);transform-origin:0 0;">Documento Adob...</div>
<div class="t" style="left:1306.21px;top:199.00px;font-size:15.4px;color:#6a6a6a;font-weight:400;transform:scaleX(0.9490);transform-origin:0 0;">1.042 KB</div>
<svg class="r" style="left:320.95px;top:232.74px" width="17" height="21" viewBox="0 0 17 21"><path d="M2.6 .7H10.2Q11 .7 11.6 1.3L15.2 4.9Q15.8 5.5 15.8 6.3V18.1Q15.8 20 13.9 20H2.6Q.7 20 .7 18.1V2.6Q.7 .7 2.6 .7Z" fill="#fdf6f6" stroke="#c97474" stroke-width="1.3"/><path d="M7.9 4.6Q8 7.4 8.2 9.4M4.3 11.9Q6.2 9.9 8.2 9.4M13.3 9.1Q10.6 9 8.2 9.4" stroke="#cf5b56" stroke-width="2.1" stroke-linecap="round" fill="none"/><rect x="5.3" y="14" width="6.1" height="2.7" fill="#474747"/></svg>
<div class="t" style="left:343.81px;top:238.00px;font-size:15.4px;color:#202020;font-weight:400;transform:scaleX(0.9947);transform-origin:0 0;">ley_hipoteca_mobiliaria_prenda_sin_desplazamiento_posesión</div>
<div class="t" style="left:935.69px;top:238.00px;font-size:15.4px;color:#6a6a6a;font-weight:400;transform:scaleX(1.0110);transform-origin:0 0;">22/03/2026 18:55</div>
<div class="t" style="left:1123.37px;top:238.00px;font-size:15.4px;color:#6a6a6a;font-weight:400;transform:scaleX(1.0279);transform-origin:0 0;">Documento Adob...</div>
<div class="t" style="left:1318.55px;top:238.00px;font-size:15.4px;color:#6a6a6a;font-weight:400;transform:scaleX(0.9490);transform-origin:0 0;">331 KB</div>
<svg class="r" style="left:320.95px;top:271.28px" width="17" height="21" viewBox="0 0 17 21"><path d="M2.6 .7H10.2Q11 .7 11.6 1.3L15.2 4.9Q15.8 5.5 15.8 6.3V18.1Q15.8 20 13.9 20H2.6Q.7 20 .7 18.1V2.6Q.7 .7 2.6 .7Z" fill="#fdf6f6" stroke="#c97474" stroke-width="1.3"/><path d="M7.9 4.6Q8 7.4 8.2 9.4M4.3 11.9Q6.2 9.9 8.2 9.4M13.3 9.1Q10.6 9 8.2 9.4" stroke="#cf5b56" stroke-width="2.1" stroke-linecap="round" fill="none"/><rect x="5.3" y="14" width="6.1" height="2.7" fill="#474747"/></svg>
<div class="t" style="left:343.80px;top:276.00px;font-size:15.4px;color:#202020;font-weight:400;transform:scaleX(1.0010);transform-origin:0 0;">ley_hipotecaria</div>
<div class="t" style="left:935.69px;top:276.00px;font-size:15.4px;color:#6a6a6a;font-weight:400;transform:scaleX(1.0110);transform-origin:0 0;">22/03/2026 18:54</div>
<div class="t" style="left:1123.37px;top:276.00px;font-size:15.4px;color:#6a6a6a;font-weight:400;transform:scaleX(1.0279);transform-origin:0 0;">Documento Adob...</div>
<div class="t" style="left:1319.50px;top:276.00px;font-size:15.4px;color:#6a6a6a;font-weight:400;transform:scaleX(0.9490);transform-origin:0 0;">611 KB</div>
<svg class="r" style="left:320.95px;top:309.82px" width="17" height="21" viewBox="0 0 17 21"><path d="M2.6 .7H10.2Q11 .7 11.6 1.3L15.2 4.9Q15.8 5.5 15.8 6.3V18.1Q15.8 20 13.9 20H2.6Q.7 20 .7 18.1V2.6Q.7 .7 2.6 .7Z" fill="#fdf6f6" stroke="#c97474" stroke-width="1.3"/><path d="M7.9 4.6Q8 7.4 8.2 9.4M4.3 11.9Q6.2 9.9 8.2 9.4M13.3 9.1Q10.6 9 8.2 9.4" stroke="#cf5b56" stroke-width="2.1" stroke-linecap="round" fill="none"/><rect x="5.3" y="14" width="6.1" height="2.7" fill="#474747"/></svg>
<div class="t" style="left:343.81px;top:315.00px;font-size:15.4px;color:#202020;font-weight:400;transform:scaleX(0.9948);transform-origin:0 0;">ley_montes</div>
<div class="t" style="left:935.69px;top:315.00px;font-size:15.4px;color:#6a6a6a;font-weight:400;transform:scaleX(1.0110);transform-origin:0 0;">22/03/2026 19:01</div>
<div class="t" style="left:1123.37px;top:315.00px;font-size:15.4px;color:#6a6a6a;font-weight:400;transform:scaleX(1.0279);transform-origin:0 0;">Documento Adob...</div>
<div class="t" style="left:1318.55px;top:315.00px;font-size:15.4px;color:#6a6a6a;font-weight:400;transform:scaleX(0.9490);transform-origin:0 0;">386 KB</div>
<svg class="r" style="left:320.95px;top:348.36px" width="17" height="21" viewBox="0 0 17 21"><path d="M2.6 .7H10.2Q11 .7 11.6 1.3L15.2 4.9Q15.8 5.5 15.8 6.3V18.1Q15.8 20 13.9 20H2.6Q.7 20 .7 18.1V2.6Q.7 .7 2.6 .7Z" fill="#fdf6f6" stroke="#c97474" stroke-width="1.3"/><path d="M7.9 4.6Q8 7.4 8.2 9.4M4.3 11.9Q6.2 9.9 8.2 9.4M13.3 9.1Q10.6 9 8.2 9.4" stroke="#cf5b56" stroke-width="2.1" stroke-linecap="round" fill="none"/><rect x="5.3" y="14" width="6.1" height="2.7" fill="#474747"/></svg>
<div class="t" style="left:343.79px;top:353.00px;font-size:15.4px;color:#202020;font-weight:400;transform:scaleX(1.0092);transform-origin:0 0;">ley_ordenación_edificación</div>
<div class="t" style="left:935.69px;top:353.00px;font-size:15.4px;color:#6a6a6a;font-weight:400;transform:scaleX(1.0110);transform-origin:0 0;">22/03/2026 19:00</div>
<div class="t" style="left:1123.37px;top:353.00px;font-size:15.4px;color:#6a6a6a;font-weight:400;transform:scaleX(1.0279);transform-origin:0 0;">Documento Adob...</div>
<div class="t" style="left:1318.55px;top:353.00px;font-size:15.4px;color:#6a6a6a;font-weight:400;transform:scaleX(0.9490);transform-origin:0 0;">229 KB</div>
<svg class="r" style="left:320.95px;top:386.90px" width="17" height="21" viewBox="0 0 17 21"><path d="M2.6 .7H10.2Q11 .7 11.6 1.3L15.2 4.9Q15.8 5.5 15.8 6.3V18.1Q15.8 20 13.9 20H2.6Q.7 20 .7 18.1V2.6Q.7 .7 2.6 .7Z" fill="#fdf6f6" stroke="#c97474" stroke-width="1.3"/><path d="M7.9 4.6Q8 7.4 8.2 9.4M4.3 11.9Q6.2 9.9 8.2 9.4M13.3 9.1Q10.6 9 8.2 9.4" stroke="#cf5b56" stroke-width="2.1" stroke-linecap="round" fill="none"/><rect x="5.3" y="14" width="6.1" height="2.7" fill="#474747"/></svg>
<div class="t" style="left:343.80px;top:392.00px;font-size:15.4px;color:#202020;font-weight:400;transform:scaleX(1.0042);transform-origin:0 0;">ley_patrimonio_administraciones_públicas</div>
<div class="t" style="left:935.69px;top:392.00px;font-size:15.4px;color:#6a6a6a;font-weight:400;transform:scaleX(1.0110);transform-origin:0 0;">22/03/2026 19:00</div>
<div class="t" style="left:1123.37px;top:392.00px;font-size:15.4px;color:#6a6a6a;font-weight:400;transform:scaleX(1.0279);transform-origin:0 0;">Documento Adob...</div>
<div class="t" style="left:1318.55px;top:392.00px;font-size:15.4px;color:#6a6a6a;font-weight:400;transform:scaleX(0.9490);transform-origin:0 0;">572 KB</div>
<svg class="r" style="left:320.95px;top:425.44px" width="17" height="21" viewBox="0 0 17 21"><path d="M2.6 .7H10.2Q11 .7 11.6 1.3L15.2 4.9Q15.8 5.5 15.8 6.3V18.1Q15.8 20 13.9 20H2.6Q.7 20 .7 18.1V2.6Q.7 .7 2.6 .7Z" fill="#fdf6f6" stroke="#c97474" stroke-width="1.3"/><path d="M7.9 4.6Q8 7.4 8.2 9.4M4.3 11.9Q6.2 9.9 8.2 9.4M13.3 9.1Q10.6 9 8.2 9.4" stroke="#cf5b56" stroke-width="2.1" stroke-linecap="round" fill="none"/><rect x="5.3" y="14" width="6.1" height="2.7" fill="#474747"/></svg>
<div class="t" style="left:343.78px;top:430.00px;font-size:15.4px;color:#202020;font-weight:400;transform:scaleX(1.0164);transform-origin:0 0;">ley_procedimiento_administrativo_común</div>
<div class="t" style="left:935.69px;top:430.00px;font-size:15.4px;color:#6a6a6a;font-weight:400;transform:scaleX(1.0110);transform-origin:0 0;">22/03/2026 18:58</div>
<div class="t" style="left:1123.37px;top:430.00px;font-size:15.4px;color:#6a6a6a;font-weight:400;transform:scaleX(1.0279);transform-origin:0 0;">Documento Adob...</div>
<div class="t" style="left:1318.55px;top:430.00px;font-size:15.4px;color:#6a6a6a;font-weight:400;transform:scaleX(0.9490);transform-origin:0 0;">566 KB</div>
<svg class="r" style="left:320.95px;top:463.98px" width="17" height="21" viewBox="0 0 17 21"><path d="M2.6 .7H10.2Q11 .7 11.6 1.3L15.2 4.9Q15.8 5.5 15.8 6.3V18.1Q15.8 20 13.9 20H2.6Q.7 20 .7 18.1V2.6Q.7 .7 2.6 .7Z" fill="#fdf6f6" stroke="#c97474" stroke-width="1.3"/><path d="M7.9 4.6Q8 7.4 8.2 9.4M4.3 11.9Q6.2 9.9 8.2 9.4M13.3 9.1Q10.6 9 8.2 9.4" stroke="#cf5b56" stroke-width="2.1" stroke-linecap="round" fill="none"/><rect x="5.3" y="14" width="6.1" height="2.7" fill="#474747"/></svg>
<div class="t" style="left:343.77px;top:469.00px;font-size:15.4px;color:#202020;font-weight:400;transform:scaleX(1.0259);transform-origin:0 0;">ley_propiedad_horizontal</div>
<div class="t" style="left:935.69px;top:469.00px;font-size:15.4px;color:#6a6a6a;font-weight:400;transform:scaleX(1.0110);transform-origin:0 0;">22/03/2026 19:00</div>
<div class="t" style="left:1123.37px;top:469.00px;font-size:15.4px;color:#6a6a6a;font-weight:400;transform:scaleX(1.0279);transform-origin:0 0;">Documento Adob...</div>
<div class="t" style="left:1318.55px;top:469.00px;font-size:15.4px;color:#6a6a6a;font-weight:400;transform:scaleX(0.9490);transform-origin:0 0;">207 KB</div>
<svg class="r" style="left:320.95px;top:502.52px" width="17" height="21" viewBox="0 0 17 21"><path d="M2.6 .7H10.2Q11 .7 11.6 1.3L15.2 4.9Q15.8 5.5 15.8 6.3V18.1Q15.8 20 13.9 20H2.6Q.7 20 .7 18.1V2.6Q.7 .7 2.6 .7Z" fill="#fdf6f6" stroke="#c97474" stroke-width="1.3"/><path d="M7.9 4.6Q8 7.4 8.2 9.4M4.3 11.9Q6.2 9.9 8.2 9.4M13.3 9.1Q10.6 9 8.2 9.4" stroke="#cf5b56" stroke-width="2.1" stroke-linecap="round" fill="none"/><rect x="5.3" y="14" width="6.1" height="2.7" fill="#474747"/></svg>
<div class="t" style="left:343.80px;top:507.00px;font-size:15.4px;color:#202020;font-weight:400;transform:scaleX(1.0041);transform-origin:0 0;">ley_reforma_ley_hipotecaria_catastro_inmobiliario</div>
<div class="t" style="left:935.69px;top:507.00px;font-size:15.4px;color:#6a6a6a;font-weight:400;transform:scaleX(1.0110);transform-origin:0 0;">22/03/2026 18:58</div>
<div class="t" style="left:1123.37px;top:507.00px;font-size:15.4px;color:#6a6a6a;font-weight:400;transform:scaleX(1.0279);transform-origin:0 0;">Documento Adob...</div>
<div class="t" style="left:1318.55px;top:507.00px;font-size:15.4px;color:#6a6a6a;font-weight:400;transform:scaleX(0.9490);transform-origin:0 0;">262 KB</div>
<svg class="r" style="left:320.95px;top:541.06px" width="17" height="21" viewBox="0 0 17 21"><path d="M2.6 .7H10.2Q11 .7 11.6 1.3L15.2 4.9Q15.8 5.5 15.8 6.3V18.1Q15.8 20 13.9 20H2.6Q.7 20 .7 18.1V2.6Q.7 .7 2.6 .7Z" fill="#fdf6f6" stroke="#c97474" stroke-width="1.3"/><path d="M7.9 4.6Q8 7.4 8.2 9.4M4.3 11.9Q6.2 9.9 8.2 9.4M13.3 9.1Q10.6 9 8.2 9.4" stroke="#cf5b56" stroke-width="2.1" stroke-linecap="round" fill="none"/><rect x="5.3" y="14" width="6.1" height="2.7" fill="#474747"/></svg>
<div class="t" style="left:343.80px;top:546.00px;font-size:15.4px;color:#202020;font-weight:400;transform:scaleX(1.0009);transform-origin:0 0;">ley_registro_civil</div>
<div class="t" style="left:935.69px;top:546.00px;font-size:15.4px;color:#6a6a6a;font-weight:400;transform:scaleX(1.0110);transform-origin:0 0;">22/03/2026 18:56</div>
<div class="t" style="left:1123.37px;top:546.00px;font-size:15.4px;color:#6a6a6a;font-weight:400;transform:scaleX(1.0279);transform-origin:0 0;">Documento Adob...</div>
<div class="t" style="left:1318.55px;top:546.00px;font-size:15.4px;color:#6a6a6a;font-weight:400;transform:scaleX(0.9490);transform-origin:0 0;">418 KB</div>
<svg class="r" style="left:320.95px;top:579.60px" width="17" height="21" viewBox="0 0 17 21"><path d="M2.6 .7H10.2Q11 .7 11.6 1.3L15.2 4.9Q15.8 5.5 15.8 6.3V18.1Q15.8 20 13.9 20H2.6Q.7 20 .7 18.1V2.6Q.7 .7 2.6 .7Z" fill="#fdf6f6" stroke="#c97474" stroke-width="1.3"/><path d="M7.9 4.6Q8 7.4 8.2 9.4M4.3 11.9Q6.2 9.9 8.2 9.4M13.3 9.1Q10.6 9 8.2 9.4" stroke="#cf5b56" stroke-width="2.1" stroke-linecap="round" fill="none"/><rect x="5.3" y="14" width="6.1" height="2.7" fill="#474747"/></svg>
<div class="t" style="left:343.80px;top:585.00px;font-size:15.4px;color:#202020;font-weight:400;transform:scaleX(1.0016);transform-origin:0 0;">ley_subrogación_modificación_préstamos_hipotecarios</div>
<div class="t" style="left:935.69px;top:585.00px;font-size:15.4px;color:#6a6a6a;font-weight:400;transform:scaleX(1.0110);transform-origin:0 0;">22/03/2026 18:59</div>
<div class="t" style="left:1123.37px;top:585.00px;font-size:15.4px;color:#6a6a6a;font-weight:400;transform:scaleX(1.0279);transform-origin:0 0;">Documento Adob...</div>
<div class="t" style="left:1318.55px;top:585.00px;font-size:15.4px;color:#6a6a6a;font-weight:400;transform:scaleX(0.9490);transform-origin:0 0;">136 KB</div>
<svg class="r" style="left:320.95px;top:618.14px" width="17" height="21" viewBox="0 0 17 21"><path d="M2.6 .7H10.2Q11 .7 11.6 1.3L15.2 4.9Q15.8 5.5 15.8 6.3V18.1Q15.8 20 13.9 20H2.6Q.7 20 .7 18.1V2.6Q.7 .7 2.6 .7Z" fill="#fdf6f6" stroke="#c97474" stroke-width="1.3"/><path d="M7.9 4.6Q8 7.4 8.2 9.4M4.3 11.9Q6.2 9.9 8.2 9.4M13.3 9.1Q10.6 9 8.2 9.4" stroke="#cf5b56" stroke-width="2.1" stroke-linecap="round" fill="none"/><rect x="5.3" y="14" width="6.1" height="2.7" fill="#474747"/></svg>
<div class="t" style="left:343.84px;top:623.00px;font-size:15.4px;color:#202020;font-weight:400;transform:scaleX(0.9647);transform-origin:0 0;">ley_venta_plazos_bienes_muebles</div>
<div class="t" style="left:935.69px;top:623.00px;font-size:15.4px;color:#6a6a6a;font-weight:400;transform:scaleX(1.0110);transform-origin:0 0;">22/03/2026 18:59</div>
<div class="t" style="left:1123.37px;top:623.00px;font-size:15.4px;color:#6a6a6a;font-weight:400;transform:scaleX(1.0279);transform-origin:0 0;">Documento Adob...</div>
<div class="t" style="left:1318.55px;top:623.00px;font-size:15.4px;color:#6a6a6a;font-weight:400;transform:scaleX(0.9490);transform-origin:0 0;">171 KB</div>
<svg class="r" style="left:320.95px;top:656.68px" width="17" height="21" viewBox="0 0 17 21"><path d="M2.6 .7H10.2Q11 .7 11.6 1.3L15.2 4.9Q15.8 5.5 15.8 6.3V18.1Q15.8 20 13.9 20H2.6Q.7 20 .7 18.1V2.6Q.7 .7 2.6 .7Z" fill="#fdf6f6" stroke="#c97474" stroke-width="1.3"/><path d="M7.9 4.6Q8 7.4 8.2 9.4M4.3 11.9Q6.2 9.9 8.2 9.4M13.3 9.1Q10.6 9 8.2 9.4" stroke="#cf5b56" stroke-width="2.1" stroke-linecap="round" fill="none"/><rect x="5.3" y="14" width="6.1" height="2.7" fill="#474747"/></svg>
<div class="t" style="left:343.83px;top:662.00px;font-size:15.4px;color:#202020;font-weight:400;transform:scaleX(0.9749);transform-origin:0 0;">ordenanza_registro_venta_plazos_bienes_muebles</div>
<div class="t" style="left:935.69px;top:662.00px;font-size:15.4px;color:#6a6a6a;font-weight:400;transform:scaleX(1.0110);transform-origin:0 0;">22/03/2026 18:56</div>
<div class="t" style="left:1123.37px;top:662.00px;font-size:15.4px;color:#6a6a6a;font-weight:400;transform:scaleX(1.0279);transform-origin:0 0;">Documento Adob...</div>
<div class="t" style="left:1318.55px;top:662.00px;font-size:15.4px;color:#6a6a6a;font-weight:400;transform:scaleX(0.9490);transform-origin:0 0;">259 KB</div>
<svg class="r" style="left:320.95px;top:695.22px" width="17" height="21" viewBox="0 0 17 21"><path d="M2.6 .7H10.2Q11 .7 11.6 1.3L15.2 4.9Q15.8 5.5 15.8 6.3V18.1Q15.8 20 13.9 20H2.6Q.7 20 .7 18.1V2.6Q.7 .7 2.6 .7Z" fill="#fdf6f6" stroke="#c97474" stroke-width="1.3"/><path d="M7.9 4.6Q8 7.4 8.2 9.4M4.3 11.9Q6.2 9.9 8.2 9.4M13.3 9.1Q10.6 9 8.2 9.4" stroke="#cf5b56" stroke-width="2.1" stroke-linecap="round" fill="none"/><rect x="5.3" y="14" width="6.1" height="2.7" fill="#474747"/></svg>
<div class="t" style="left:343.82px;top:700.00px;font-size:15.4px;color:#202020;font-weight:400;transform:scaleX(0.9848);transform-origin:0 0;">real_decreto_arancel_registradores_condiciones_generales_contratación</div>
<div class="t" style="left:935.69px;top:700.00px;font-size:15.4px;color:#6a6a6a;font-weight:400;transform:scaleX(1.0110);transform-origin:0 0;">22/03/2026 18:57</div>
<div class="t" style="left:1123.37px;top:700.00px;font-size:15.4px;color:#6a6a6a;font-weight:400;transform:scaleX(1.0279);transform-origin:0 0;">Documento Adob...</div>
<div class="t" style="left:1318.55px;top:700.00px;font-size:15.4px;color:#6a6a6a;font-weight:400;transform:scaleX(0.9490);transform-origin:0 0;">165 KB</div>
<svg class="r" style="left:320.95px;top:733.76px" width="17" height="21" viewBox="0 0 17 21"><path d="M2.6 .7H10.2Q11 .7 11.6 1.3L15.2 4.9Q15.8 5.5 15.8 6.3V18.1Q15.8 20 13.9 20H2.6Q.7 20 .7 18.1V2.6Q.7 .7 2.6 .7Z" fill="#fdf6f6" stroke="#c97474" stroke-width="1.3"/><path d="M7.9 4.6Q8 7.4 8.2 9.4M4.3 11.9Q6.2 9.9 8.2 9.4M13.3 9.1Q10.6 9 8.2 9.4" stroke="#cf5b56" stroke-width="2.1" stroke-linecap="round" fill="none"/><rect x="5.3" y="14" width="6.1" height="2.7" fill="#474747"/></svg>
<div class="t" style="left:343.80px;top:739.00px;font-size:15.4px;color:#202020;font-weight:400;transform:scaleX(0.9975);transform-origin:0 0;">real_decreto_arancel_registradores_propiedad</div>
<div class="t" style="left:935.69px;top:739.00px;font-size:15.4px;color:#6a6a6a;font-weight:400;transform:scaleX(1.0110);transform-origin:0 0;">22/03/2026 18:55</div>
<div class="t" style="left:1123.37px;top:739.00px;font-size:15.4px;color:#6a6a6a;font-weight:400;transform:scaleX(1.0279);transform-origin:0 0;">Documento Adob...</div>
<div class="t" style="left:1318.55px;top:739.00px;font-size:15.4px;color:#6a6a6a;font-weight:400;transform:scaleX(0.9490);transform-origin:0 0;">209 KB</div>
<svg class="r" style="left:320.95px;top:772.30px" width="17" height="21" viewBox="0 0 17 21"><path d="M2.6 .7H10.2Q11 .7 11.6 1.3L15.2 4.9Q15.8 5.5 15.8 6.3V18.1Q15.8 20 13.9 20H2.6Q.7 20 .7 18.1V2.6Q.7 .7 2.6 .7Z" fill="#fdf6f6" stroke="#c97474" stroke-width="1.3"/><path d="M7.9 4.6Q8 7.4 8.2 9.4M4.3 11.9Q6.2 9.9 8.2 9.4M13.3 9.1Q10.6 9 8.2 9.4" stroke="#cf5b56" stroke-width="2.1" stroke-linecap="round" fill="none"/><rect x="5.3" y="14" width="6.1" height="2.7" fill="#474747"/></svg>
<div class="t" style="left:343.80px;top:777.00px;font-size:15.4px;color:#202020;font-weight:400;transform:scaleX(1.0036);transform-origin:0 0;">real_decreto_desarrollo_ley_catastro_inmobiliario</div>
<div class="t" style="left:935.69px;top:777.00px;font-size:15.4px;color:#6a6a6a;font-weight:400;transform:scaleX(1.0110);transform-origin:0 0;">22/03/2026 18:58</div>
<div class="t" style="left:1123.37px;top:777.00px;font-size:15.4px;color:#6a6a6a;font-weight:400;transform:scaleX(1.0279);transform-origin:0 0;">Documento Adob...</div>
<div class="t" style="left:1318.55px;top:777.00px;font-size:15.4px;color:#6a6a6a;font-weight:400;transform:scaleX(0.9490);transform-origin:0 0;">398 KB</div>
<svg class="r" style="left:320.95px;top:810.84px" width="17" height="21" viewBox="0 0 17 21"><path d="M2.6 .7H10.2Q11 .7 11.6 1.3L15.2 4.9Q15.8 5.5 15.8 6.3V18.1Q15.8 20 13.9 20H2.6Q.7 20 .7 18.1V2.6Q.7 .7 2.6 .7Z" fill="#fdf6f6" stroke="#c97474" stroke-width="1.3"/><path d="M7.9 4.6Q8 7.4 8.2 9.4M4.3 11.9Q6.2 9.9 8.2 9.4M13.3 9.1Q10.6 9 8.2 9.4" stroke="#cf5b56" stroke-width="2.1" stroke-linecap="round" fill="none"/><rect x="5.3" y="14" width="6.1" height="2.7" fill="#474747"/></svg>
<div class="t" style="left:343.81px;top:816.00px;font-size:15.4px;color:#202020;font-weight:400;transform:scaleX(0.9885);transform-origin:0 0;">real_decreto_inscripción_contratos_arrendamientos_urbanos</div>
<div class="t" style="left:935.69px;top:816.00px;font-size:15.4px;color:#6a6a6a;font-weight:400;transform:scaleX(1.0110);transform-origin:0 0;">22/03/2026 18:54</div>
<div class="t" style="left:1123.37px;top:816.00px;font-size:15.4px;color:#6a6a6a;font-weight:400;transform:scaleX(1.0279);transform-origin:0 0;">Documento Adob...</div>
<div class="t" style="left:1319.50px;top:816.00px;font-size:15.4px;color:#6a6a6a;font-weight:400;transform:scaleX(0.9490);transform-origin:0 0;">116 KB</div>
<svg class="r" style="left:320.95px;top:849.38px" width="17" height="21" viewBox="0 0 17 21"><path d="M2.6 .7H10.2Q11 .7 11.6 1.3L15.2 4.9Q15.8 5.5 15.8 6.3V18.1Q15.8 20 13.9 20H2.6Q.7 20 .7 18.1V2.6Q.7 .7 2.6 .7Z" fill="#fdf6f6" stroke="#c97474" stroke-width="1.3"/><path d="M7.9 4.6Q8 7.4 8.2 9.4M4.3 11.9Q6.2 9.9 8.2 9.4M13.3 9.1Q10.6 9 8.2 9.4" stroke="#cf5b56" stroke-width="2.1" stroke-linecap="round" fill="none"/><rect x="5.3" y="14" width="6.1" height="2.7" fill="#474747"/></svg>
<div class="t" style="left:343.81px;top:854.00px;font-size:15.4px;color:#202020;font-weight:400;transform:scaleX(0.9910);transform-origin:0 0;">real_decreto_legislativo_texto_refundido_ley_aguas</div>
<div class="t" style="left:935.69px;top:854.00px;font-size:15.4px;color:#6a6a6a;font-weight:400;transform:scaleX(1.0110);transform-origin:0 0;">22/03/2026 19:01</div>
<div class="t" style="left:1123.37px;top:854.00px;font-size:15.4px;color:#6a6a6a;font-weight:400;transform:scaleX(1.0279);transform-origin:0 0;">Documento Adob...</div>
<div class="t" style="left:1318.55px;top:854.00px;font-size:15.4px;color:#6a6a6a;font-weight:400;transform:scaleX(0.9490);transform-origin:0 0;">500 KB</div>
<svg class="r" style="left:320.95px;top:887.92px" width="17" height="21" viewBox="0 0 17 21"><path d="M2.6 .7H10.2Q11 .7 11.6 1.3L15.2 4.9Q15.8 5.5 15.8 6.3V18.1Q15.8 20 13.9 20H2.6Q.7 20 .7 18.1V2.6Q.7 .7 2.6 .7Z" fill="#fdf6f6" stroke="#c97474" stroke-width="1.3"/><path d="M7.9 4.6Q8 7.4 8.2 9.4M4.3 11.9Q6.2 9.9 8.2 9.4M13.3 9.1Q10.6 9 8.2 9.4" stroke="#cf5b56" stroke-width="2.1" stroke-linecap="round" fill="none"/><rect x="5.3" y="14" width="6.1" height="2.7" fill="#474747"/></svg>
</div>
<div class="r" style="left:1979.40px;top:166.20px;width:20.60px;height:924.30px;background:#efefef"></div>
<div class="r" style="left:1987.60px;top:297.50px;width:3.20px;height:500.00px;background:#828282;border-radius:2px"></div>
<svg class="r" style="left:886.00px;top:600.00px;" width="17" height="24" viewBox="0 0 17 24" fill="none"><path d="M2.3 2.2V18.4L6.3 14.9 9.3 21.2 11.7 20 8.9 14.1H14Z" fill="#fff" stroke="#333" stroke-width="1.35" stroke-linejoin="round"/></svg>
<div class="r" style="left:0.00px;top:1090.50px;width:2000.00px;height:31.50px;background:#ffffff"></div>
<div class="t" style="left:17.80px;top:1100.00px;font-size:15.4px;color:#40444a;font-weight:400;transform:scaleX(1.0011);transform-origin:0 0;">41 elementos</div>
<div class="r" style="left:122.30px;top:1100.00px;width:1.00px;height:15.00px;background:#ececec"></div>
<div class="t" style="left:136.49px;top:1100.00px;font-size:15.4px;color:#40444a;font-weight:400;transform:scaleX(1.0133);transform-origin:0 0;">1 elemento seleccionado</div>
<div class="t" style="left:317.04px;top:1100.00px;font-size:15.4px;color:#40444a;font-weight:400;transform:scaleX(0.9592);transform-origin:0 0;">371 KB</div>
<div class="r" style="left:1930.30px;top:1091.30px;width:32.30px;height:32.00px;background:#e6f3fd;border:1.6px solid #6e7a84;box-sizing:border-box;border-radius:1px"></div>
<svg class="r" style="left:1939.50px;top:1100.50px;" width="15" height="16" viewBox="0 0 15 16" fill="none"><path d="M0.5 1.6H14.5M0.5 5.9H14.5M0.5 10.1H14.5M0.5 14.3H14.5" stroke="#5d6670" stroke-width="1.4" stroke-linecap="round"/></svg>
<svg class="r" style="left:1970.50px;top:1099.20px;" width="16" height="16" viewBox="0 0 16 16" fill="none"><rect x="1" y="1" width="13.8" height="11.6" stroke="#555" stroke-width="1.3" fill="#fff"/><path d="M1 14.6H14.8" stroke="#666" stroke-width="1.3"/></svg>
<div class="r" style="left:0.00px;top:1123.00px;width:2000.00px;height:2.00px;background:#000"></div>
</body></html>
